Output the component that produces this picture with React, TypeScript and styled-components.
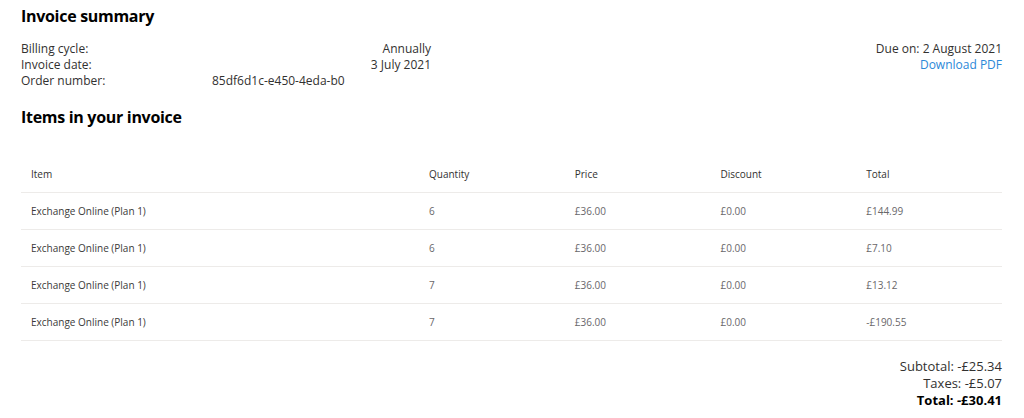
import React from "react";
import styled, { createGlobalStyle } from "styled-components";

const GlobalStyle = createGlobalStyle`
  body {
    margin: 0;
    background: #ffffff;
    font-family: "Open Sans", "Noto Sans", sans-serif;
    color: #323130;
  }
`;

const Page = styled.div`
  padding: 4px 22px 0 21px;
  width: 1024px;
  box-sizing: border-box;
`;

const Heading = styled.h2`
  margin: 0;
  font-size: 16px;
  font-weight: 700;
  line-height: 24px;
  letter-spacing: -0.3px;
  color: #000;
`;

const Summary = styled.div`
  display: flex;
  justify-content: space-between;
  margin: 13px 0 16px;
  font-size: 12px;
  line-height: 16px;
  color: #323130;
`;

const Details = styled.div`
  display: grid;
  grid-template-columns: 191px 219px;
`;

const Label = styled.div``;

const Value = styled.div<{ $left?: boolean }>`
  text-align: ${(p) => (p.$left ? "left" : "right")};
`;

const Side = styled.div`
  display: flex;
  flex-direction: column;
  align-items: flex-end;
`;

const Link = styled.a`
  color: #2b88d8;
  text-decoration: none;
  cursor: pointer;
`;

const Table = styled.table`
  width: 100%;
  border-collapse: collapse;
  margin-top: 26px;
  font-size: 10px;
  table-layout: fixed;
`;

const Th = styled.th<{ $w?: number }>`
  text-align: left;
  font-weight: 400;
  color: #323130;
  padding: 0 10px;
  height: 37px;
  border-bottom: 1px solid #edebe9;
  width: ${(p) => (p.$w ? `${p.$w}px` : "auto")};
`;

const Td = styled.td<{ $strong?: boolean }>`
  padding: 0 10px;
  height: 36px;
  border-bottom: 1px solid #edebe9;
  color: ${(p) => (p.$strong ? "#3b3a39" : "#69676a")};
`;

const Totals = styled.div`
  display: flex;
  flex-direction: column;
  align-items: flex-end;
  margin-top: 17px;
  font-size: 13px;
  line-height: 17px;
  color: #323130;
`;

const Grand = styled.div`
  font-weight: 700;
  color: #000;
`;

const rows = [
  { item: "Exchange Online (Plan 1)", qty: 6, price: "£36.00", discount: "£0.00", total: "£144.99" },
  { item: "Exchange Online (Plan 1)", qty: 6, price: "£36.00", discount: "£0.00", total: "£7.10" },
  { item: "Exchange Online (Plan 1)", qty: 7, price: "£36.00", discount: "£0.00", total: "£13.12" },
  { item: "Exchange Online (Plan 1)", qty: 7, price: "£36.00", discount: "£0.00", total: "-£190.55" },
];

export default function App() {
  return (
    <Page>
      <GlobalStyle />
      <Heading>Invoice summary</Heading>
      <Summary>
        <Details>
          <Label>Billing cycle:</Label>
          <Value>Annually</Value>
          <Label>Invoice date:</Label>
          <Value>3 July 2021</Value>
          <Label>Order number:</Label>
          <Value $left>85df6d1c-e450-4eda-b0</Value>
        </Details>
        <Side>
          <div>Due on: 2 August 2021</div>
          <Link>Download PDF</Link>
        </Side>
      </Summary>
      <Heading>Items in your invoice</Heading>
      <Table>
        <thead>
          <tr>
            <Th $w={378}>Item</Th>
            <Th>Quantity</Th>
            <Th>Price</Th>
            <Th>Discount</Th>
            <Th>Total</Th>
          </tr>
        </thead>
        <tbody>
          {rows.map((r, i) => (
            <tr key={i}>
              <Td $strong>{r.item}</Td>
              <Td>{r.qty}</Td>
              <Td>{r.price}</Td>
              <Td>{r.discount}</Td>
              <Td>{r.total}</Td>
            </tr>
          ))}
        </tbody>
      </Table>
      <Totals>
        <div>Subtotal: -£25.34</div>
        <div>Taxes: -£5.07</div>
        <Grand>Total: -£30.41</Grand>
      </Totals>
    </Page>
  );
}
